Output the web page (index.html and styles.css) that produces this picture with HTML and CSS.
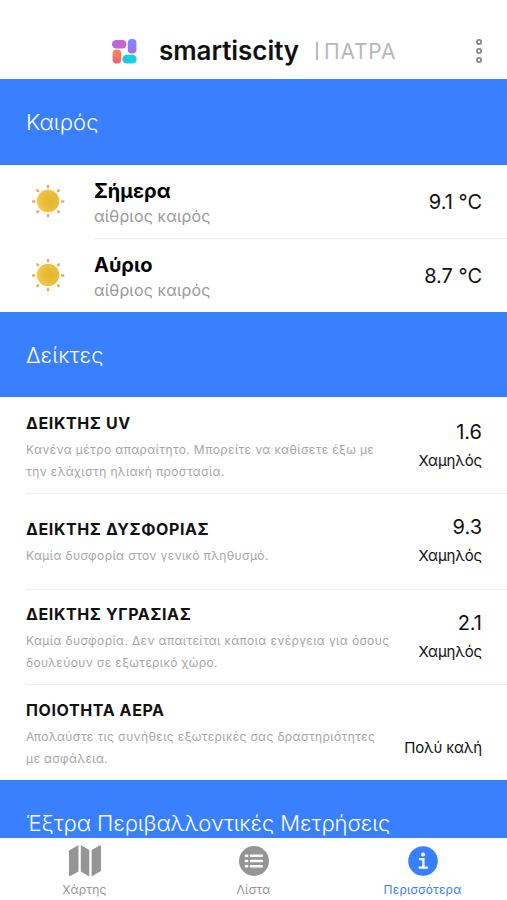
FILE: index.html
```html
<!DOCTYPE html>
<html lang="el">
<head>
  <meta charset="UTF-8" />
  <meta name="viewport" content="width=device-width, initial-scale=1" />
  <title>smartiscity | ΠΑΤΡΑ</title>
  <link rel="stylesheet" href="styles.css">
</head>
<body>
  <header>
    <svg class="logo" viewBox="0 0 25 25">
      <defs>
        <linearGradient id="g1"><stop offset="0" stop-color="#a66cf0"/><stop offset="1" stop-color="#dc62b4"/></linearGradient>
        <linearGradient id="g2" x2="0" y2="1"><stop offset="0" stop-color="#6d93f8"/><stop offset="1" stop-color="#a86bf3"/></linearGradient>
        <linearGradient id="g3" x2="0" y2="1"><stop offset="0" stop-color="#fb8a55"/><stop offset="1" stop-color="#f9606b"/></linearGradient>
        <linearGradient id="g4"><stop offset="0" stop-color="#16c8e8"/><stop offset="1" stop-color="#1fd3dc"/></linearGradient>
      </defs>
      <rect x="0" y="1" width="14.5" height="8.5" rx="4.2" fill="url(#g1)"/>
      <rect x="15.8" y="0" width="8.6" height="14.5" rx="3.8" fill="url(#g2)"/>
      <rect x="0.6" y="10.6" width="8.6" height="14" rx="3.8" fill="url(#g3)"/>
      <rect x="10.4" y="15.8" width="14.3" height="8.6" rx="4.2" fill="url(#g4)"/>
    </svg>
    <h1>smartiscity</h1>
    <span class="bar"></span>
    <span class="city">ΠΑΤΡΑ</span>
    <svg class="dots" viewBox="0 0 8 26">
      <circle cx="4" cy="4" r="2.1"/>
      <circle cx="4" cy="13" r="2.1"/>
      <circle cx="4" cy="22" r="2.1"/>
    </svg>
  </header>

  <main>
    <h2>Καιρός</h2>
    <div class="weather">
      <svg class="sun" viewBox="0 0 34 34">
        <defs>
          <radialGradient id="sun" cx="0.62" cy="0.48" r="0.62"><stop offset="0" stop-color="#e3b72c"/><stop offset="0.6" stop-color="#ebbd3c"/><stop offset="1" stop-color="#f3cd55"/></radialGradient>
        </defs>
        <circle cx="17" cy="17" r="11.3" fill="url(#sun)"/>
        <path d="M17 2v1.300M17 31v1.300M2 17.500h1.300M31 17.500h1.300M6.300 6.300l.9.900M27 27.300l.9.900M6.300 28.200l.9-.9M27 7.200l.9-.9"/>
      </svg>
      <div class="day">
        <div>
          <h3>Σήμερα</h3>
          <p>αίθριος καιρός</p>
        </div>
        <span class="temp">9.1 °C</span>
      </div>
    </div>
    <div class="weather">
      <svg class="sun" viewBox="0 0 34 34">
        <circle cx="17" cy="17" r="11.3" fill="url(#sun)"/>
        <path d="M17 2v1.300M17 31v1.300M2 17.500h1.300M31 17.500h1.300M6.300 6.300l.9.900M27 27.300l.9.900M6.300 28.200l.9-.9M27 7.200l.9-.9"/>
      </svg>
      <div class="day">
        <div>
          <h3>Αύριο</h3>
          <p>αίθριος καιρός</p>
        </div>
        <span class="temp">8.7 °C</span>
      </div>
    </div>

    <h2>Δείκτες</h2>
    <div class="index">
      <div class="info">
        <h4>ΔΕΙΚΤΗΣ UV</h4>
        <p>Κανένα μέτρο απαραίτητο. Μπορείτε να καθίσετε έξω με<br>την ελάχιστη ηλιακή προστασία.</p>
      </div>
      <div class="value"><strong>1.6</strong><span>Χαμηλός</span></div>
    </div>
    <div class="index">
      <div class="info">
        <h4>ΔΕΙΚΤΗΣ ΔΥΣΦΟΡΙΑΣ</h4>
        <p>Καμία δυσφορία στον γενικό πληθυσμό.</p>
      </div>
      <div class="value"><strong>9.3</strong><span>Χαμηλός</span></div>
    </div>
    <div class="index">
      <div class="info">
        <h4>ΔΕΙΚΤΗΣ ΥΓΡΑΣΙΑΣ</h4>
        <p>Καμία δυσφορία. Δεν απαιτείται κάποια ενέργεια για όσους<br>δουλεύουν σε εξωτερικό χώρο.</p>
      </div>
      <div class="value"><strong>2.1</strong><span>Χαμηλός</span></div>
    </div>
    <div class="index">
      <div class="info">
        <h4>ΠΟΙΟΤΗΤΑ ΑΕΡΑ</h4>
        <p>Απολαύστε τις συνήθεις εξωτερικές σας δραστηριότητες<br>με ασφάλεια.</p>
      </div>
      <div class="value"><strong></strong><span>Πολύ καλή</span></div>
    </div>

    <h2 class="long">Έξτρα Περιβαλλοντικές Μετρήσεις</h2>
  </main>

  <nav>
    <a>
      <svg viewBox="0 0 34 34">
        <path d="M1 6.500L10.500 1v26.500L2.500 32Q1 32.500 1 31zM12.800 1l8.500 5v26.500l-8.500-5zM23.600 6l7.900-4.500Q33 1 33 2.500V27l-9.400 5.500z" fill="currentColor"/>
      </svg>
      <span>Χάρτης</span>
    </a>
    <a>
      <svg viewBox="0 0 34 34">
        <circle cx="17" cy="17" r="15" fill="currentColor"/>
        <path d="M8.900 11.800h1.200M8.900 17h1.200M8.900 22.200h1.200M14 11.800h10.800M14 17h10.800M14 22.200h10.800" stroke="#fff" stroke-width="2.600" stroke-linecap="round"/>
      </svg>
      <span>Λίστα</span>
    </a>
    <a class="active">
      <svg viewBox="0 0 34 34">
        <circle cx="17" cy="17" r="14.800" fill="currentColor"/>
        <circle cx="17" cy="10.500" r="2" fill="#fff"/>
        <path d="M14 15.200h3.400v8.300M13.500 23.700h7.500" fill="none" stroke="#fff" stroke-width="2.300" stroke-linecap="round"/>
      </svg>
      <span>Περισσότερα</span>
    </a>
  </nav>
</body>
</html>
```
FILE: styles.css
```css
* {
  box-sizing: border-box;
}
body {
  font-family: Inter, "Noto Sans", sans-serif;
  background: #fff;
  color: #111;
  margin: 0;
  height: 900px;
  overflow: hidden;
  display: flex;
  flex-direction: column;
}
h1, h2, h3, h4, p {
  margin: 0;
}
header {
  display: flex;
  align-items: center;
  flex-shrink: 0;
  height: 79px;
  padding: 23px 24px 0 112px;
}
.logo {
  width: 25px;
  height: 25px;
}
h1 {
  font-size: 26px;
  line-height: 32px;
  font-weight: 600;
  width: 140px;
  margin-left: 22px;
  letter-spacing: -0.05px;
}
.bar {
  width: 2px;
  height: 18px;
  margin-left: 17px;
  background: #bbb;
}
.city {
  margin-left: 6px;
  font-size: 21px;
  letter-spacing: 0.8px;
  color: #b8b8b8;
}
.dots {
  width: 8px;
  height: 26px;
  margin-left: auto;
  fill: none;
  stroke: #858585;
  stroke-width: 1.8;
}
main {
  flex: 1;
  min-height: 0;
  overflow: hidden;
}
h2 {
  height: 85.5px;
  line-height: 86px;
  padding-left: 26px;
  background: #3880ff;
  color: #fff;
  font-size: 22px;
  font-weight: 300;
  letter-spacing: 0.1px;
  white-space: nowrap;
}
h2.long {
  letter-spacing: -0.1px;
}
.weather {
  display: flex;
  align-items: center;
  height: 73.7px;
  padding-left: 31px;
}
.sun {
  width: 34px;
  height: 34px;
  margin-right: 29px;
  stroke: #eda765;
  stroke-width: 2.4;
  stroke-linecap: round;
}
.sun circle {
  stroke: none;
}
.day {
  flex: 1;
  height: 100%;
  display: flex;
  align-items: center;
  justify-content: space-between;
  padding: 2px 25px 0 0;
}
.weather:has(+ .weather) .day {
  box-shadow: 0 1px #eee;
}
h3 {
  padding-top: 2px;
  font-size: 20px;
  line-height: 25px;
  font-weight: 700;
  color: #000;
}
.day p {
  font-size: 16px;
  line-height: 24px;
  letter-spacing: 0.15px;
  color: #999;
}
.temp {
  font-size: 20px;
}
.index {
  display: flex;
  align-items: center;
  justify-content: space-between;
  height: 95.7px;
  margin-left: 26px;
  padding: 2px 25px 0 0;
}
.index:has(+ .index) {
  box-shadow: 0 1px #eee;
}
h4 {
  margin-bottom: 3px;
  font-size: 16px;
  line-height: 26px;
  font-weight: 700;
  letter-spacing: 0.6px;
}
.info p {
  font-size: 12px;
  line-height: 22px;
  letter-spacing: 0.38px;
  color: #a6a6a6;
  white-space: nowrap;
}
.value {
  display: flex;
  flex-direction: column;
  text-align: right;
}
.value strong {
  height: 29px;
  line-height: 29px;
  font-size: 20px;
  font-weight: 400;
}
.value span {
  font-size: 15px;
  line-height: 28px;
  letter-spacing: -0.15px;
}
nav {
  display: flex;
  flex-shrink: 0;
  height: 62px;
  background: #fff;
}
nav a {
  flex: 1;
  display: flex;
  flex-direction: column;
  align-items: center;
  padding-top: 6px;
  color: #959595;
  font-size: 12px;
}
nav svg {
  flex-shrink: 0;
  width: 34px;
  height: 34px;
}
nav span {
  line-height: 23px;
  letter-spacing: 0.25px;
}
nav .active {
  color: #3880ff;
}
```
